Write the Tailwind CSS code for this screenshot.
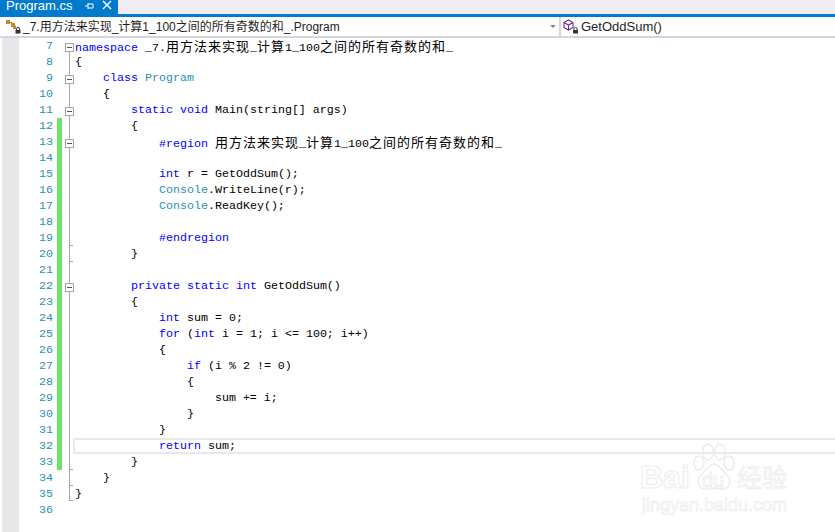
<!DOCTYPE html>
<html>
  <head>
    <meta charset="UTF-8" />
    <meta name="viewport" content="width=device-width, initial-scale=1.0" />
    <script src="https://cdn.jsdelivr.net/npm/@tailwindcss/browser@4"></script>
  </head>

  <body class="w-[835px] h-[532px] overflow-hidden bg-white relative font-['Liberation_Sans','Noto_Sans_CJK_SC',sans-serif]">
    <!-- tab strip -->
    <div class="h-[14px] bg-[#eeeef2] flex">
      <div class="w-[118px] h-[14px] bg-[#007acc] text-white text-[13px] leading-[12px] pl-[6px] flex items-start overflow-hidden">
        <span class="w-[78px]">Program.cs</span>
        <svg class="mt-[1px]" width="10" height="10" viewBox="0 0 10 10" fill="none" stroke="white"><path d="M1 5h3M4 2v6M4 3h5M4 7h5M9 3v4" /></svg>
        <svg class="ml-[8px]" width="10" height="10" viewBox="0 0 10 10" fill="none" stroke="white" stroke-width="1.4"><path d="M1 1l8 8M9 1l-8 8" /></svg>
      </div>
    </div>
    <div class="h-[3px] bg-[#007acc]"></div>

    <!-- navigation bar -->
    <div class="h-[21px] flex bg-white border-b-[2px] border-[#d3d6e0] text-[#1e1e1e]">
      <div class="w-[561px] pl-[5px] flex items-center relative border-r-[2px] border-[#d3d6e0] text-[12px]">
        <svg width="18" height="15" viewBox="0 0 18 15"><path d="M3 3.500h4v3h3v2" fill="none" stroke="#8a6d3b" stroke-width="1" /><rect x="1" y="1" width="4" height="4" fill="#c8872e" /><rect x="6" y="4" width="4" height="4" fill="#c8872e" /><rect x="8" y="7" width="3" height="3" fill="#c8872e" /><path d="M11.500 11v-1.200a1.500 1.500 0 0 1 3 0V11" fill="none" stroke="#333" /><rect x="10.500" y="11" width="5" height="3.500" fill="#333" /></svg>
        <span class="leading-none">_7.用方法来实现_计算1_100之间的所有奇数的和_.Program</span>
        <span class="absolute right-[3px] top-[8px] size-0 border-x-[3px] border-t-[3px] border-x-transparent border-t-[#8a8a8a]"></span>
      </div>
      <div class="flex-1 pl-[2px] flex items-center text-[13px]">
        <svg width="17" height="15" viewBox="0 0 17 15"><path d="M5.500 1l4.500 2.500v5L5.500 11 1 8.500v-5zM1 3.500l4.500 2.500L10 3.500M5.500 6v5" fill="none" stroke="#652d90" stroke-width="1.100" /><path d="M11 11v-1.200a1.500 1.500 0 0 1 3 0V11" fill="none" stroke="#333" /><rect x="10" y="11" width="5" height="3.500" fill="#333" /></svg>
        <span class="ml-[1px] leading-none">GetOddSum()</span>
      </div>
    </div>

    <!-- editor -->
    <div class="flex h-[494px]">
      <div class="w-[2px]"></div>
      <div class="w-[17px] bg-[#e6e7e8]"></div>
      <div id="editor" class="flex-1 font-['Liberation_Mono','Noto_Sans_CJK_SC',monospace] text-[11.67px] leading-[16px] text-black"></div>
    </div>

    <!-- watermark -->
    <div class="absolute left-[640px] top-[442px] w-[190px] h-[80px]">
      <svg class="absolute left-[52px] top-[1px]" width="44" height="48" viewBox="0 0 44 48" fill="none" stroke="#ececec" stroke-width="1.500">
        <ellipse cx="7" cy="20" rx="5" ry="7" />
        <ellipse cx="16" cy="9" rx="5.500" ry="8" />
        <ellipse cx="28" cy="9" rx="5.500" ry="8" />
        <ellipse cx="37" cy="20" rx="5" ry="7" />
        <path d="M22 21c-5 0-8 6-13 11-5 5-3 15 6 14 5-1 9-1 14 0 9 1 11-9 6-14-5-5-8-11-13-11z" />
      </svg>
      <span class="absolute left-[0px] top-[18px] text-[32px] leading-[34px] font-bold text-white [-webkit-text-stroke:1px_#ececec]">Bai</span>
      <span class="absolute left-[62px] top-[30px] text-[20px] leading-[16px] text-white [-webkit-text-stroke:0.800px_#ececec]">du</span>
      <span class="absolute left-[97px] top-[19px] text-[25px] leading-[30px] text-white font-['Noto_Sans_CJK_SC',sans-serif] [-webkit-text-stroke:0.800px_#ececec]">经验</span>
      <span class="absolute left-[2px] top-[52px] text-[18px] leading-[22px] text-white [-webkit-text-stroke:0.700px_#ececec]">jingyan.baidu.com</span>
    </div>

    <script>
      const KW = "text-[#0000ff]";
      const TYPE = "text-[#2b91af]";
      const CJK = "font-['Noto_Sans_CJK_SC',sans-serif] text-[13px] tracking-[1px]";

      const title = [
        ["用方法来实现", CJK], ["_"], ["计算", CJK], ["1_100"], ["之间的所有奇数的和", CJK], ["_"],
      ];

      // number, fold mark, changed, tokens
      const lines = [
        [7, "first", 0, [["namespace", KW], [" _7."], ...title]],
        [8, "", 0, [["{"]]],
        [9, "box", 0, [["    "], ["class", KW], [" "], ["Program", TYPE]]],
        [10, "", 0, [["    {"]]],
        [11, "box", 0, [["        "], ["static", KW], [" "], ["void", KW], [" Main(string[] args)"]]],
        [12, "", 1, [["        {"]]],
        [13, "box", 1, [["            "], ["#region", KW], [" "], ...title]],
        [14, "", 1, []],
        [15, "", 1, [["            "], ["int", KW], [" r = GetOddSum();"]]],
        [16, "", 1, [["            "], ["Console", TYPE], [".WriteLine(r);"]]],
        [17, "", 1, [["            "], ["Console", TYPE], [".ReadKey();"]]],
        [18, "", 1, []],
        [19, "tick", 1, [["            "], ["#endregion", KW]]],
        [20, "tick", 1, [["        }"]]],
        [21, "", 1, []],
        [22, "box", 1, [["        "], ["private", KW], [" "], ["static", KW], [" "], ["int", KW], [" GetOddSum()"]]],
        [23, "", 1, [["        {"]]],
        [24, "", 1, [["            "], ["int", KW], [" sum = 0;"]]],
        [25, "", 1, [["            "], ["for", KW], [" ("], ["int", KW], [" i = 1; i <= 100; i++)"]]],
        [26, "", 1, [["            {"]]],
        [27, "", 1, [["                "], ["if", KW], [" (i % 2 != 0)"]]],
        [28, "", 1, [["                {"]]],
        [29, "", 1, [["                    sum += i;"]]],
        [30, "", 1, [["                }"]]],
        [31, "", 1, [["            }"]]],
        [32, "", 1, [["            "], ["return", KW], [" sum;"]]],
        [33, "tick", 1, [["        }"]]],
        [34, "tick", 0, [["    }"]]],
        [35, "end", 0, [["}"]]],
        [36, "none", 0, []],
      ];

      const guide = {
        first: "absolute left-[7px] top-[5px] h-[11px] w-[1px] bg-[#a5a5a5]",
        full: "absolute left-[7px] top-0 h-[16px] w-[1px] bg-[#a5a5a5]",
        end: "absolute left-[7px] top-0 h-[15px] w-[1px] bg-[#a5a5a5]",
      };
      const box = `<div class="absolute left-[3px] top-[5px] size-[9px] bg-white border border-[#a5a5a5]"><div class="absolute left-[1px] top-[3px] w-[5px] h-[1px] bg-[#555555]"></div></div>`;
      const tick = `<div class="absolute left-[7px] bottom-0 w-[4px] h-[1px] bg-[#a5a5a5]"></div>`;
      const endTick = `<div class="absolute left-[7px] top-[14px] w-[4px] h-[1px] bg-[#a5a5a5]"></div>`;

      const html = lines.map(([num, fold, changed, tokens]) => {
        let foldHtml = "";
        if (fold === "first") foldHtml = `<div class="${guide.first}"></div>${box}`;
        else if (fold === "end") foldHtml = `<div class="${guide.end}"></div>${endTick}`;
        else if (fold !== "none") {
          foldHtml = `<div class="${guide.full}"></div>`;
          if (fold === "box") foldHtml += box;
          if (fold === "tick") foldHtml += tick;
        }

        const code = tokens
          .map(([text, cls]) => `<span class="relative ${cls || ""}">${text.replace(/</g, "&lt;")}</span>`)
          .join("");
        const highlight = num === 32
          ? `<div class="absolute left-[-2px] right-[-4px] top-0 h-[16px] border-2 border-[#e8e8ee]"></div>`
          : "";
        return `<div class="flex h-[16px]">
          <div class="w-[34px] text-right text-[#2b91af]">${num}</div>
          <div class="w-[5px] ml-[4px] ${changed ? "bg-[#6ce26c]" : ""}"></div>
          <div class="w-[13px] relative">${foldHtml}</div>
          <div class="flex-1 whitespace-pre relative">${highlight}${code}</div>
        </div>`;
      });
      document.getElementById("editor").innerHTML = html.join("");
    </script>
  </body>
</html>
